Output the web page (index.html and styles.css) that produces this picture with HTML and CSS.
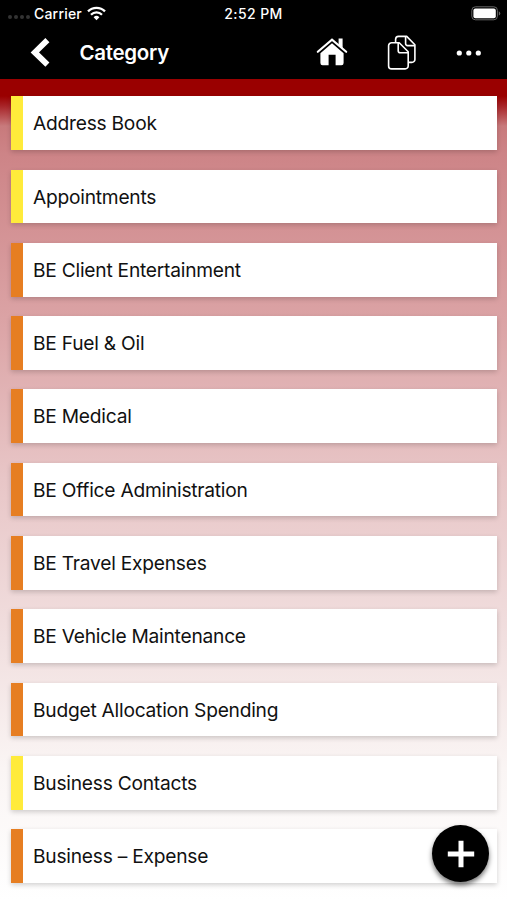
FILE: index.html
```html
<!DOCTYPE html>
<html lang="en">
<head>
    <meta charset="UTF-8">
    <meta name="viewport" content="width=device-width, initial-scale=1.0">
    <title>Category</title>
    <link rel="stylesheet" href="styles.css">
</head>
<body>

<header class="header">
    <div class="status-bar">
        <div class="status-left">
            <span class="signal"><i></i><i></i><i></i><i></i></span>
            <span class="carrier">Carrier</span>
            <svg class="wifi" width="19" height="15" viewBox="0 0 19 15" fill="none" stroke="#fff" stroke-width="2.3">
                <path d="M1 5.4a12 12 0 0 1 17 0"/>
                <path d="M4 8.7a7.8 7.8 0 0 1 11 0"/>
                <path d="M9.5 14.2L6.6 11.3a4.1 4.1 0 0 1 5.8 0z" fill="#fff" stroke="none"/>
            </svg>
        </div>
        <span class="time">2:52 PM</span>
        <div class="status-right">
            <svg width="30" height="15" viewBox="0 0 30 15">
                <rect x="0.8" y="0.8" width="25.6" height="13" rx="3.6" fill="none" stroke="#666" stroke-width="1"/>
                <rect x="2.4" y="2.4" width="22.4" height="9.8" rx="2" fill="#fff"/>
                <path d="M27.8 5.2q1.5.8 1.5 2.2t-1.5 2.2z" fill="#666"/>
            </svg>
        </div>
    </div>
    <div class="nav-bar">
        <button class="back-button" aria-label="Back">
            <svg width="20" height="32" viewBox="0 0 20 32">
                <path d="M17.4 3.2L4.8 15.4 17.4 27.6" fill="none" stroke="#fff" stroke-width="5.8"/>
            </svg>
        </button>
        <h1 class="title">Category</h1>
        <div class="actions">
            <button aria-label="Home">
                <svg width="32" height="30" viewBox="0 0 32 30">
                    <path d="M22.6 0.5h4V11l-4-4z" fill="#fff"/>
                    <path d="M1.8 13.8L16 1.6l14.2 12.2" fill="none" stroke="#fff" stroke-width="2.1" stroke-linecap="round"/>
                    <path d="M16 5.2l11.6 10v9.9q0 2.2-2.2 2.2h-5.8V16.8h-7v10.5H6.6q-2.2 0-2.2-2.2v-9.9z" fill="#fff"/>
                </svg>
            </button>
            <button aria-label="Copy">
                <svg width="30" height="36" viewBox="0 0 30 36" fill="none" stroke="#fff" stroke-width="1.6" stroke-linejoin="round">
                    <path d="M8.6 7.4V4.4a3 3 0 0 1 3-3h8.1l8.2 8.4v14.6a3 3 0 0 1-3 3h-3.6"/>
                    <path d="M18.6 1.4v7.2a2 2 0 0 0 2 2h7.3"/>
                    <path d="M4.4 7.8h7.8l9 9v14.1a3 3 0 0 1-3 3H4.6a3 3 0 0 1-3-3V10.8a3 3 0 0 1 3-3z"/>
                    <path d="M11.2 7.8v8a2 2 0 0 0 2 2h8"/>
                </svg>
            </button>
            <button aria-label="More">
                <svg width="26" height="6" viewBox="0 0 26 6" fill="#fff">
                    <circle cx="3.3" cy="3" r="2.6"/>
                    <circle cx="12.8" cy="3" r="2.6"/>
                    <circle cx="22.3" cy="3" r="2.6"/>
                </svg>
            </button>
        </div>
    </div>
</header>

<main class="category-list">
    <div class="card yellow">Address Book</div>
    <div class="card yellow">Appointments</div>
    <div class="card orange">BE Client Entertainment</div>
    <div class="card orange">BE Fuel &amp; Oil</div>
    <div class="card orange">BE Medical</div>
    <div class="card orange">BE Office Administration</div>
    <div class="card orange">BE Travel Expenses</div>
    <div class="card orange">BE Vehicle Maintenance</div>
    <div class="card orange">Budget Allocation Spending</div>
    <div class="card yellow">Business Contacts</div>
    <div class="card orange">Business – Expense</div>
</main>

<button class="add-button" aria-label="Add">
    <svg width="28" height="28" viewBox="0 0 28 28">
        <path d="M14 0.8v26.4M0.8 14h26.4" stroke="#fff" stroke-width="5"/>
    </svg>
</button>

</body>
</html>
```
FILE: styles.css
```css
body {
    display: flex;
    flex-direction: column;
    height: 900px;
    margin: 0;
    overflow: hidden;
    background-color: white;
    font-family: Inter, "Liberation Sans", sans-serif;
}

button {
    display: flex;
    align-items: center;
    justify-content: center;
    padding: 0;
    border: none;
    background: none;
    cursor: pointer;
}

.header {
    flex: none;
    height: 79px;
    background-color: black;
    color: white;
}

.status-bar {
    display: grid;
    grid-template-columns: 1fr auto 1fr;
    align-items: center;
    height: 26px;
    padding: 0 8px;
    font-size: 14px;
    font-weight: 500;
}

.status-left {
    display: flex;
    align-items: center;
}

.signal {
    display: flex;
    gap: 2px;
    margin: 8px 4px 0 0;
}

.signal i {
    width: 4px;
    height: 4px;
    border-radius: 50%;
    background-color: #333;
}

.carrier {
    letter-spacing: 0.2px;
}

.wifi {
    margin-left: 5px;
}

.time {
    letter-spacing: 0.4px;
}

.status-right {
    display: flex;
    justify-content: flex-end;
    margin-right: -2px;
}

.nav-bar {
    display: flex;
    align-items: center;
    height: 53px;
    padding: 0 25px 0 30px;
}

.title {
    flex: 1;
    margin: 0 0 0 29.5px;
    font-size: 20.5px;
    font-weight: 600;
    letter-spacing: -0.3px;
    line-height: 26px;
}

.actions {
    display: flex;
    align-items: center;
    gap: 39px;
}

.category-list {
    display: flex;
    flex: 1;
    flex-direction: column;
    gap: 19.6px;
    padding: 17.3px 10px 0 11px;
    background: linear-gradient(#9a0000 0, #9a0000 17px, #a82428 27px, #c87a7c 47px, #cd8487 75px, #dba3a5 240px, #e8c6c7 400px, #f1dfdf 560px, #faf5f4 690px, #fff 821px);
}

.card {
    display: flex;
    flex: none;
    align-items: center;
    box-sizing: border-box;
    height: 53.7px;
    padding: 0.4px 0 0 10px;
    border-left: 12px solid;
    background-color: white;
    box-shadow: 0 2px 5px rgba(0, 0, 0, 0.18);
    color: #111;
    font-size: 19.2px;
    letter-spacing: -0.24px;
}

.yellow {
    border-left-color: #ffeb3b;
}

.orange {
    border-left-color: #e67e22;
}

.add-button {
    position: absolute;
    right: 18px;
    bottom: 18px;
    width: 57px;
    height: 57px;
    border-radius: 50%;
    background-color: black;
    box-shadow: 0 3px 5px rgba(0, 0, 0, 0.55);
}
```
